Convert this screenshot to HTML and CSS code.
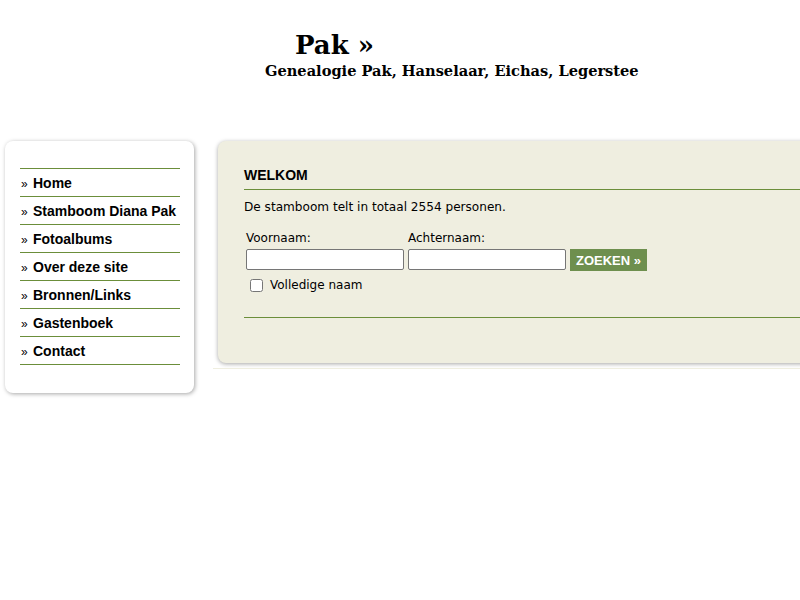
FILE: index.html
```html
<!DOCTYPE html>
<html>
<head>
<meta charset="utf-8">
<link rel="stylesheet" href="styles.css">
</head>
<body>
<div class="header">
  <div class="title">Pak »</div>
  <div class="subtitle">Genealogie Pak, Hanselaar, Eichas, Legerstee</div>
</div>
<div class="main">
  <div class="sidebar">
    <ul class="menu">
      <li><span class="raquo">»</span>Home</li>
      <li><span class="raquo">»</span>Stamboom Diana Pak</li>
      <li><span class="raquo">»</span>Fotoalbums</li>
      <li><span class="raquo">»</span>Over deze site</li>
      <li><span class="raquo">»</span>Bronnen/Links</li>
      <li><span class="raquo">»</span>Gastenboek</li>
      <li><span class="raquo">»</span>Contact</li>
    </ul>
  </div>
  <div class="content-wrap">
    <div class="content">
      <h2 class="heading">WELKOM</h2>
      <p class="intro">De stamboom telt in totaal 2554 personen.</p>
      <form class="search">
        <div class="fields">
          <div class="field">
            <label class="lbl">Voornaam:</label>
            <input type="text" class="txt">
          </div>
          <div class="field">
            <label class="lbl">Achternaam:</label>
            <input type="text" class="txt">
          </div>
          <button type="button" class="btn">ZOEKEN »</button>
        </div>
        <label class="check"><input type="checkbox" class="cb"> Volledige naam</label>
      </form>
      <div class="rule"></div>
    </div>
    <div class="underline"></div>
  </div>
</div>
</body>
</html>
```
FILE: styles.css
```css
html, body {
  margin: 0;
  padding: 0;
  background: #fff;
  overflow: hidden;
}
body {
  width: 800px;
  height: 600px;
  font-family: "DejaVu Sans", sans-serif;
  color: #000;
}
.header {
  height: 141px;
  box-sizing: border-box;
  padding-top: 30px;
}
.title {
  font-family: "DejaVu Serif", serif;
  font-weight: bold;
  font-size: 26px;
  line-height: 31px;
  padding-left: 295px;
}
.subtitle {
  font-family: "DejaVu Serif", serif;
  font-weight: bold;
  font-size: 14.6px;
  line-height: 20px;
  padding-left: 265px;
}
.main {
  display: flex;
  align-items: flex-start;
  width: 1200px;
}
.sidebar {
  margin-left: 5px;
  width: 189px;
  height: 252px;
  box-sizing: border-box;
  background: #fff;
  border-radius: 8px;
  box-shadow: 1px 1px 4px rgba(0,0,0,0.35);
  padding: 27px 14px 0 15px;
}
.menu {
  list-style: none;
  margin: 0;
  padding: 0;
  border-top: 1px solid #6b8e3a;
}
.menu li {
  height: 27px;
  line-height: 28px;
  border-bottom: 1px solid #6b8e3a;
  font-family: "Liberation Sans", Arial, sans-serif;
  font-weight: bold;
  font-size: 14px;
}
.raquo {
  display: inline-block;
  width: 12px;
  padding-left: 1px;
  font-weight: normal;
  font-size: 12px;
}
.content-wrap {
  margin-left: 19px;
  width: 900px;
}
.content {
  margin-left: 5px;
  background: #efeee0;
  border-radius: 8px 0 0 8px;
  box-shadow: 0 1px 4px rgba(0,0,0,0.35);
  height: 222px;
  box-sizing: border-box;
  padding: 25px 0 0 26px;
}
.heading {
  margin: 0;
  font-family: "Liberation Sans", Arial, sans-serif;
  font-weight: bold;
  font-size: 14px;
  line-height: 18px;
  padding-bottom: 5px;
  border-bottom: 1px solid #6b8e3a;
}
.intro {
  margin: 9px 0 0 0;
  font-size: 12.1px;
  line-height: 16px;
}
.search {
  margin: 16px 0 0 2px;
}
.fields {
  display: flex;
  align-items: flex-end;
  gap: 4px;
}
.field {
  display: flex;
  flex-direction: column;
}
.lbl {
  font-size: 12px;
  line-height: 15px;
  padding-bottom: 3px;
}
.txt {
  width: 158px;
  height: 21px;
  box-sizing: border-box;
  margin: 0;
  border: 1px solid #767676;
  border-radius: 2px;
  background: #fff;
  padding: 1px 2px;
}
.btn {
  height: 22px;
  margin: 0 0 -1px 0;
  border: none;
  background: #6e8f4e;
  color: #fff;
  font-family: "Liberation Sans", Arial, sans-serif;
  font-weight: bold;
  font-size: 13px;
  padding: 0 5px;
  width: 77px;
}
.check {
  display: flex;
  align-items: center;
  margin-top: 6px;
  font-size: 12px;
  line-height: 18px;
}
.cb {
  margin: 0 7px 0 4px;
  width: 13px;
  height: 13px;
}
.rule {
  margin-top: 23px;
  border-top: 1px solid #6b8e3a;
}
.underline {
  margin-top: 5px;
  height: 1px;
  background: #efeee0;
}
```
